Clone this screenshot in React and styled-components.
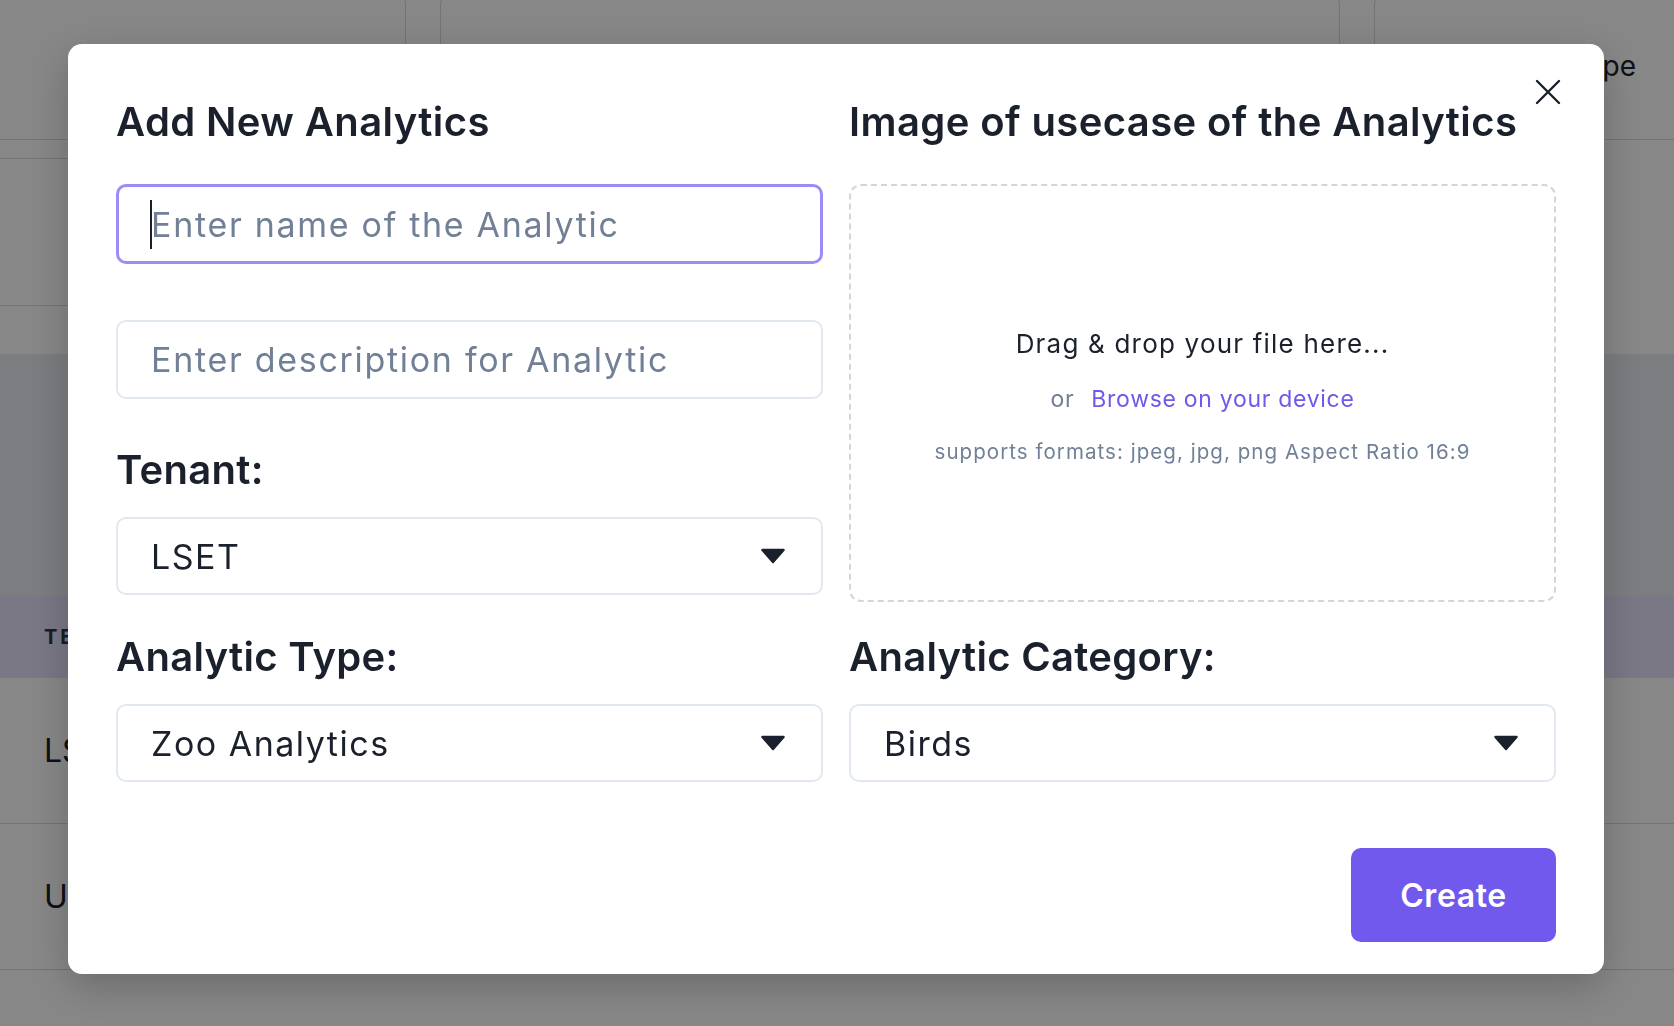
import React from "react";
import styled, { createGlobalStyle } from "styled-components";

const GlobalStyle = createGlobalStyle`
  * { box-sizing: border-box; }
  html, body {
    margin: 0;
    padding: 0;
    overflow: hidden;
    font-family: Inter, "Noto Sans", sans-serif;
    color: #1a202c;
  }
`;

const tableRows = ["LSET", "UPL"];

const CloseIcon = () => (
  <svg width="26" height="26" viewBox="0 0 26 26" fill="none">
    <path d="M2 2 L24 24 M24 2 L2 24" stroke="#1a202c" strokeWidth="2.4" strokeLinecap="round" />
  </svg>
);

const CaretDown = () => (
  <svg width="26" height="16" viewBox="0 0 26 16">
    <path d="M2.5 2 H23.5 L13 14 Z" fill="#1a202c" stroke="#1a202c" strokeWidth="2.5" strokeLinejoin="round" />
  </svg>
);

const Select = ({ value }) => (
  <SelectBox>
    <SelectValue>{value}</SelectValue>
    <CaretDown />
  </SelectBox>
);

const App = () => {
  return (
    <>
      <GlobalStyle />
      <Page>
        <CardsRow>
          <Card width="426px" />
          <Card width="900px" />
          <Card grow>
            <CardText>Analytic Type</CardText>
          </Card>
        </CardsRow>
        <FilterStrip />
        <Band />
        <TableHead>
          <HeadCell>TENANT</HeadCell>
        </TableHead>
        {tableRows.map((row) => (
          <TableRow key={row}>
            <RowCell>{row}</RowCell>
          </TableRow>
        ))}
      </Page>

      <Overlay>
        <Modal>
          <CloseButton aria-label="close">
            <CloseIcon />
          </CloseButton>

          <Title>Add New Analytics</Title>
          <Title>Image of usecase of the Analytics</Title>

          <LeftStack>
            <InputWrap>
              <TextInput focused placeholder="Enter name of the Analytic" />
              <Caret />
            </InputWrap>
            <InputWrap>
              <TextInput placeholder="Enter description for Analytic" />
            </InputWrap>
            <Label>Tenant:</Label>
            <Select value="LSET" />
          </LeftStack>

          <DropZone>
            <DropTitle>Drag &amp; drop your file here...</DropTitle>
            <BrowseLine>
              or<BrowseLink>Browse on your device</BrowseLink>
            </BrowseLine>
            <DropHint>supports formats: jpeg, jpg, png Aspect Ratio 16:9</DropHint>
          </DropZone>

          <Field>
            <Label>Analytic Type:</Label>
            <Select value="Zoo Analytics" />
          </Field>

          <Field>
            <Label>Analytic Category:</Label>
            <Select value="Birds" />
          </Field>

          <Footer>
            <CreateButton>Create</CreateButton>
          </Footer>
        </Modal>
      </Overlay>
    </>
  );
};

const Page = styled.div`
  position: relative;
  height: 100vh;
  overflow: hidden;
  background: #ffffff;
`;

const CardsRow = styled.div`
  display: flex;
  gap: 34px;
  margin: -8px -20px 0 -20px;
`;

const Card = styled.div`
  flex: ${(p) => (p.grow ? "1" : "none")};
  width: ${(p) => p.width || "auto"};
  height: 148px;
  border: 1px solid #d6d9df;
  border-radius: 12px;
  display: flex;
  align-items: center;
  justify-content: flex-end;
  padding-right: 57px;
`;

const CardText = styled.span`
  font-size: 28px;
  color: #1a202c;
`;

const FilterStrip = styled.div`
  margin-top: 18px;
  width: 420px;
  height: 148px;
  border-top: 1px solid #d6d9df;
  border-bottom: 1px solid #d6d9df;
`;

const Band = styled.div`
  margin-top: 48px;
  height: 242px;
  background: #e8ecf2;
`;

const TableHead = styled.div`
  height: 82px;
  background: #e6e2fb;
  display: flex;
  align-items: center;
  padding-left: 44px;
`;

const HeadCell = styled.div`
  width: 24px;
  overflow: hidden;
  white-space: nowrap;
  font-size: 20px;
  font-weight: 700;
  letter-spacing: 3px;
  color: #2d3748;
`;

const TableRow = styled.div`
  height: 146px;
  display: flex;
  align-items: center;
  padding-left: 44px;
  border-bottom: 1px solid #d6d9df;
`;

const RowCell = styled.div`
  width: 24px;
  overflow: hidden;
  white-space: nowrap;
  font-size: 32px;
  color: #1a202c;
`;

const Overlay = styled.div`
  position: fixed;
  inset: 0;
  background: rgba(0, 0, 0, 0.47);
  display: flex;
  justify-content: center;
  align-items: flex-start;
  padding: 44px 2px 0 0;
`;

const Modal = styled.div`
  position: relative;
  width: 1536px;
  background: #ffffff;
  border-radius: 14px;
  box-shadow: 0 12px 40px rgba(0, 0, 0, 0.22);
  padding: 48px 48px 32px 48px;
  display: grid;
  grid-template-columns: 1fr 1fr;
  column-gap: 26px;
  align-items: start;
`;

const CloseButton = styled.button`
  position: absolute;
  top: 35px;
  right: 43px;
  width: 26px;
  height: 26px;
  padding: 0;
  border: none;
  background: none;
  display: flex;
  cursor: pointer;
`;

const Title = styled.h2`
  margin: 0 0 32px 0;
  font-size: 40px;
  line-height: 60px;
  font-weight: 600;
  letter-spacing: 0.4px;
  color: #1a202c;
  white-space: nowrap;
`;

const LeftStack = styled.div`
  display: flex;
  flex-direction: column;
`;

const InputWrap = styled.div`
  position: relative;
  display: flex;
  & + & {
    margin-top: 56px;
  }
`;

const TextInput = styled.input`
  height: ${(p) => (p.focused ? "80px" : "79px")};
  width: 100%;
  border: ${(p) => (p.focused ? "3px solid #9d8cf4" : "2px solid #e2e8f0")};
  border-radius: 10px;
  padding: 0 ${(p) => (p.focused ? "32px" : "33px")};
  font-family: Inter, "Noto Sans", sans-serif;
  font-size: 34px;
  letter-spacing: 1.7px;
  color: #1a202c;
  outline: none;
  &::placeholder {
    color: #718096;
  }
`;

const Caret = styled.span`
  position: absolute;
  left: 34px;
  top: 16px;
  width: 2px;
  height: 49px;
  background: #1a202c;
`;

const Label = styled.div`
  margin: 41px 0 17px 0;
  font-size: 40px;
  line-height: 60px;
  font-weight: 600;
  letter-spacing: 0.3px;
  color: #1a202c;
`;

const SelectBox = styled.div`
  height: 78px;
  border: 2px solid #e2e8f0;
  border-radius: 10px;
  display: flex;
  align-items: center;
  justify-content: space-between;
  padding: 0 35px 0 33px;
  background: #ffffff;
`;

const SelectValue = styled.span`
  font-size: 34px;
  letter-spacing: 1.5px;
  color: #1a202c;
`;

const Field = styled.div`
  display: flex;
  flex-direction: column;
  margin-top: 25px;
  & > ${Label} {
    margin: 0 0 17px 0;
  }
`;

const DropZone = styled.div`
  height: 418px;
  border: 2px dashed #cfd6e0;
  border-radius: 12px;
  display: flex;
  flex-direction: column;
  align-items: center;
  justify-content: center;
  gap: 21px;
  padding-top: 6px;
`;

const DropTitle = styled.div`
  font-size: 26px;
  line-height: 36px;
  letter-spacing: 1.2px;
  color: #1a202c;
`;

const BrowseLine = styled.div`
  font-size: 23px;
  line-height: 33px;
  letter-spacing: 0.7px;
  color: #718096;
`;

const BrowseLink = styled.span`
  margin-left: 17px;
  color: #6d5ae9;
  cursor: pointer;
`;

const DropHint = styled.div`
  font-size: 20.5px;
  line-height: 30px;
  letter-spacing: 1.05px;
  color: #718096;
`;

const Footer = styled.div`
  grid-column: 1 / span 2;
  display: flex;
  justify-content: flex-end;
  margin-top: 66px;
`;

const CreateButton = styled.button`
  width: 205px;
  height: 94px;
  border: none;
  border-radius: 10px;
  background: #7159ee;
  color: #ffffff;
  font-family: Inter, "Noto Sans", sans-serif;
  font-size: 32px;
  font-weight: 600;
  letter-spacing: 0.6px;
  cursor: pointer;
`;

export default App;
